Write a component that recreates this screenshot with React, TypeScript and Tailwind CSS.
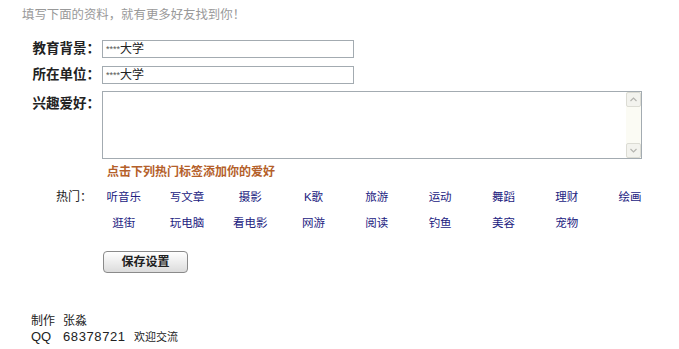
import React from 'react';

const hotTags = [
  '听音乐', '写文章', '摄影', 'K歌', '旅游', '运动', '舞蹈', '理财', '绘画',
  '逛街', '玩电脑', '看电影', '网游', '阅读', '钓鱼', '美容', '宠物',
];

const font = { fontFamily: '"Liberation Sans", "Noto Sans CJK SC", sans-serif' };

const FakeInput = () => (
  <div className="ml-[2px] flex h-[18px] w-[252px] items-center border border-[#a3abb1] bg-white pl-[3px] text-[12px] leading-none text-[#222]">
    <span className="text-[9px] text-[#555]">****</span>
    <span>大学</span>
  </div>
);

export default function App() {
  return (
    <div className="min-h-[349px] w-[679px] bg-white" style={font}>
      <p className="pl-[22px] pt-[7px] text-[12.4px] leading-[16px] text-[#999]">
        填写下面的资料，就有更多好友找到你！
      </p>

      <div className="mt-[17px] flex flex-col gap-[8px]">
        <div className="flex items-center">
          <label className="w-[100px] text-right text-[13.5px] font-bold leading-[16px] text-[#222]">教育背景：</label>
          <FakeInput />
        </div>
        <div className="flex items-center">
          <label className="w-[100px] text-right text-[13.5px] font-bold leading-[16px] text-[#222]">所在单位：</label>
          <FakeInput />
        </div>
      </div>

      <div className="mt-[7px] flex items-start">
        <label className="w-[100px] pt-[5px] text-right text-[13.5px] font-bold leading-[16px] text-[#222]">兴趣爱好：</label>
        <div className="ml-[2px] flex h-[68px] w-[540px] border border-[#a3abb1] bg-white">
          <textarea className="h-full flex-1 resize-none bg-white outline-none" />
          <div className="flex w-[15px] flex-col justify-between bg-[#fbfbf4]">
            <div className="flex h-[15px] items-center justify-center rounded-[2px] border border-[#dcdcd4] bg-[#f3f3ee]">
              <svg width="7" height="5" viewBox="0 0 7 5">
                <path d="M0.5 4 L3.5 1 L6.5 4" fill="none" stroke="#b5b5b0" strokeWidth="1.2" />
              </svg>
            </div>
            <div className="flex h-[15px] items-center justify-center rounded-[2px] border border-[#dcdcd4] bg-[#f3f3ee]">
              <svg width="7" height="5" viewBox="0 0 7 5">
                <path d="M0.5 1 L3.5 4 L6.5 1" fill="none" stroke="#b5b5b0" strokeWidth="1.2" />
              </svg>
            </div>
          </div>
        </div>
      </div>

      <p className="mt-[5px] pl-[107px] text-[12px] font-bold leading-[16px] text-[#b4602a]">
        点击下列热门标签添加你的爱好
      </p>

      <div className="mt-[4px] flex items-start">
        <span className="w-[92px] text-right text-[12px] leading-[26px] text-[#222]">热门：</span>
        <div className="grid grid-cols-[repeat(9,63.3px)]">
          {hotTags.map((t) => (
            <a key={t} className="cursor-pointer text-center text-[11.5px] leading-[26px] text-[#22227f]">
              {t}
            </a>
          ))}
        </div>
      </div>

      <div className="mt-[13px] pl-[103px]">
        <button className="h-[22px] w-[85px] rounded-[4px] border border-[#8a8a8a] bg-gradient-to-b from-white to-[#dcdcdc] text-[12px] font-bold text-[#222]">
          保存设置
        </button>
      </div>

      <div className="mt-[40px] pl-[31px] text-[12px] leading-[16px] text-[#222]">
        <div className="flex">
          <span className="w-[32px]">制作</span>
          <span>张淼</span>
        </div>
        <div className="flex">
          <span className="w-[32px] text-[13px]">QQ</span>
          <span className="w-[71px] text-[13px] tracking-[0.6px]">68378721</span>
          <span className="text-[11px]">欢迎交流</span>
        </div>
      </div>
    </div>
  );
}
